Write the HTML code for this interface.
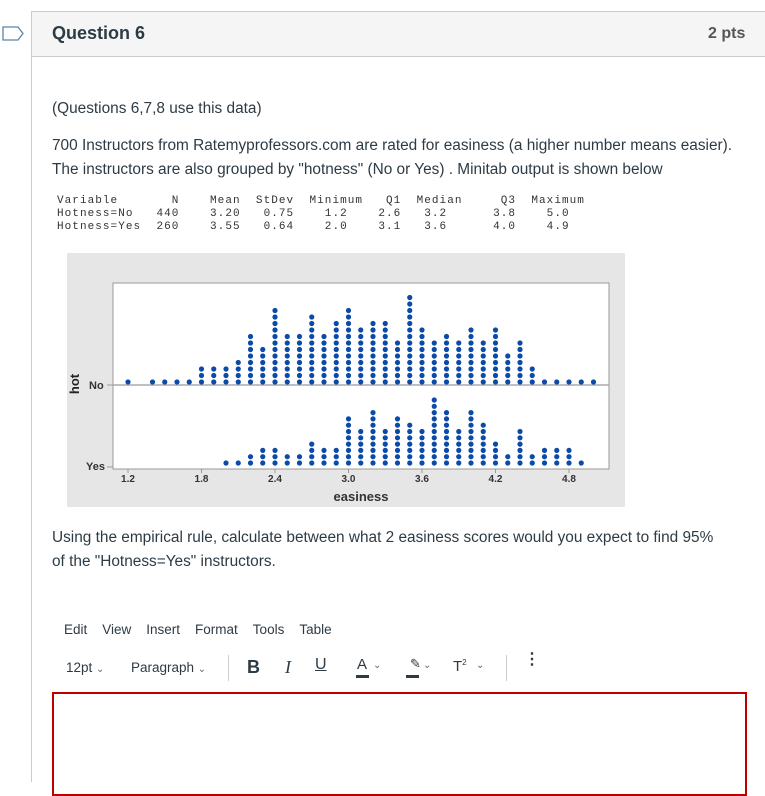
<!DOCTYPE html>
<html><head><meta charset="utf-8"><style>
body{margin:0;width:765px;height:772px;overflow:hidden;background:#fff;font-family:"Liberation Sans",sans-serif;color:#2d3b45;position:relative}
.card{position:absolute;left:31px;top:11px;width:740px;height:770px;border-left:1px solid #c7cdd1;border-top:1px solid #c7cdd1}
.hdr{position:absolute;left:0;top:0;right:0;height:44px;background:#f5f5f5;border-bottom:1px solid #c7cdd1}
.abs{position:absolute;white-space:nowrap}
pre.abs{margin:0;font-family:"Liberation Mono",monospace;font-size:11px;letter-spacing:1.05px;line-height:13px;color:#333;white-space:pre}
.tb{font-size:13.5px;color:#2d3b45}
.p{font-size:15.4px}
</style></head><body>
<svg class="abs" style="left:2px;top:26px" width="22" height="15"><path d="M1 1H16L21 7.5L16 14H1Z" fill="none" stroke="#5a84a8" stroke-width="1.3"/></svg>
<div class="card"><div class="hdr"></div></div>
<div class="abs" style="left:52px;top:23px;font-size:18px;font-weight:bold;color:#2d3b45">Question 6</div>
<div class="abs" style="left:708px;top:25px;font-size:16px;font-weight:bold;color:#555">2 pts</div>
<div class="abs p" style="left:52px;top:100px">(Questions 6,7,8 use this data)</div>
<div class="abs p" style="left:52px;top:137px">700 Instructors from Ratemyprofessors.com are rated for easiness (a higher number means easier).</div>
<div class="abs p" style="left:52px;top:161px">The instructors are also grouped by "hotness" (No or Yes) . Minitab output is shown below</div>
<pre class="abs" style="left:57px;top:195px">Variable       N    Mean  StDev  Minimum   Q1  Median     Q3  Maximum
Hotness=No   440    3.20   0.75    1.2    2.6   3.2      3.8    5.0
Hotness=Yes  260    3.55   0.64    2.0    3.1   3.6      4.0    4.9</pre>
<svg class="abs" style="left:67px;top:253px" width="558" height="254" id="ch">
<rect width="558" height="254" fill="#e6e6e6"/>
<rect x="46" y="30" width="496" height="186" fill="#fff" stroke="#999" stroke-width="1"/>
<line x1="46" y1="132" x2="542" y2="132" stroke="#aaa" stroke-width="1.5"/>
<line x1="40" y1="132" x2="46" y2="132" stroke="#999"/>
<line x1="40" y1="214" x2="46" y2="214" stroke="#999"/>
<text x="22" y="136" font-size="11" font-weight="bold" fill="#333" font-family="Liberation Sans">No</text>
<text x="19" y="217" font-size="11" font-weight="bold" fill="#333" font-family="Liberation Sans">Yes</text>
<text transform="translate(12,131) rotate(-90)" font-size="13" font-weight="bold" fill="#222" text-anchor="middle" font-family="Liberation Sans">hot</text>
<text x="294" y="248" font-size="13" font-weight="bold" fill="#333" text-anchor="middle" font-family="Liberation Sans">easiness</text>
<g id="dots" fill="#0a4aa8"></g>
<g id="ticks" font-size="10" font-weight="bold" fill="#333" text-anchor="middle" font-family="Liberation Sans"></g>
</svg>
<script>
var no=[1,0,1,1,1,1,3,3,3,4,8,6,12,8,8,11,8,10,12,9,10,10,7,14,9,7,8,7,9,7,9,5,7,3,1,1,1,1,1];
var yes=[0,0,0,0,0,0,0,0,1,1,2,3,3,2,2,4,3,3,8,6,9,6,8,7,6,11,9,6,9,7,4,2,6,2,3,3,3,1];
var s='';
function X(i){return 61+i*12.25;}
for(var i=0;i<no.length;i++)for(var j=0;j<no[i];j++)s+='<circle cx="'+X(i)+'" cy="'+(129-j*6.5)+'" r="2.6"/>';
for(var i=0;i<yes.length;i++)for(var j=0;j<yes[i];j++)s+='<circle cx="'+X(i)+'" cy="'+(210-j*6.3)+'" r="2.6"/>';
document.getElementById('dots').innerHTML=s;
var t='',l=['1.2','1.8','2.4','3.0','3.6','4.2','4.8'];
for(var k=0;k<7;k++){var x=X(k*6);t+='<line x1="'+x+'" y1="216" x2="'+x+'" y2="220" stroke="#999"/><text x="'+x+'" y="229">'+l[k]+'</text>';}
document.getElementById('ticks').innerHTML=t;
</script>
<div class="abs p" style="left:52px;top:529px">Using the empirical rule, calculate between what 2 easiness scores would you expect to find 95%</div>
<div class="abs p" style="left:52px;top:553px">of the "Hotness=Yes" instructors.</div>
<div class="abs tb" style="left:64px;top:622px">Edit&nbsp;&nbsp;&nbsp;&nbsp;View&nbsp;&nbsp;&nbsp;&nbsp;Insert&nbsp;&nbsp;&nbsp;&nbsp;Format&nbsp;&nbsp;&nbsp;&nbsp;Tools&nbsp;&nbsp;&nbsp;&nbsp;Table</div>
<div class="abs tb" style="left:66px;top:660px">12pt <span style="font-size:10px;color:#666">&#8964;</span></div>
<div class="abs tb" style="left:131px;top:660px">Paragraph <span style="font-size:10px;color:#666">&#8964;</span></div>
<div class="abs" style="left:228px;top:655px;width:1px;height:26px;background:#ccc"></div>
<div class="abs" style="left:247px;top:657px;font-size:18px;font-weight:bold">B</div>
<div class="abs" style="left:285px;top:657px;font-size:18px;font-style:italic;font-family:'Liberation Serif',serif">I</div>
<div class="abs" style="left:315px;top:656px;font-size:16px;text-decoration:underline">U</div>
<div class="abs" style="left:357px;top:656px;font-size:15px">A</div>
<div class="abs" style="left:356px;top:675px;width:13px;height:3px;background:#2d3b45"></div>
<div class="abs" style="left:373px;top:660px;font-size:10px;color:#666">&#8964;</div>
<div class="abs" style="left:410px;top:656px;font-size:13px">&#9998;</div>
<div class="abs" style="left:406px;top:675px;width:13px;height:3px;background:#2d3b45"></div>
<div class="abs" style="left:423px;top:660px;font-size:10px;color:#666">&#8964;</div>
<div class="abs" style="left:453px;top:658px;font-size:15px">T<sup style="font-size:8px">2</sup></div>
<div class="abs" style="left:476px;top:660px;font-size:10px;color:#666">&#8964;</div>
<div class="abs" style="left:506px;top:655px;width:1px;height:26px;background:#ccc"></div>
<div class="abs" style="left:524px;top:656px;font-size:16px;font-weight:bold;line-height:8px">&#8942;</div>
<div class="abs" style="left:52px;top:692px;width:691px;height:100px;border:2px solid #b00"></div>
</body></html>
